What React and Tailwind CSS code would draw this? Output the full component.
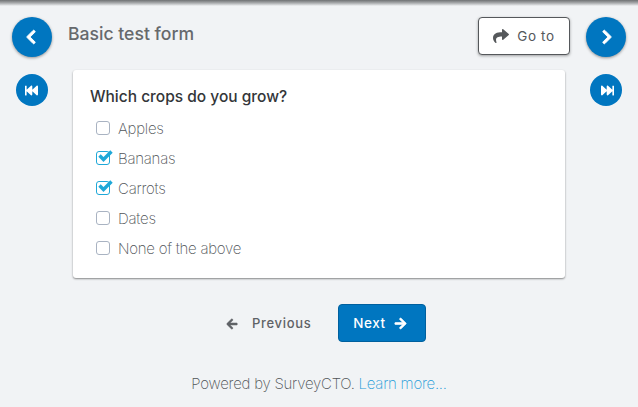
import { FaChevronLeft, FaChevronRight, FaFastBackward, FaFastForward, FaShare, FaArrowLeft, FaArrowRight } from "react-icons/fa";

function Option({ label, checked }) {
  return (
    <label className="flex items-center h-[30px]">
      <span className={`relative w-[14px] h-[14px] rounded-[3px] border-[1.5px] bg-white ml-[6px] ${checked ? "border-[#1fa8d8]" : "border-[#a9b3c2]"}`}>
        {checked && (
          <svg viewBox="0 0 16 14" className="absolute left-[0px] top-[-3px] w-[16px] h-[14px]">
            <path d="M2.5 6.5 L6.5 10.5 L14.5 2.5" fill="none" stroke="#1fa8d8" strokeWidth="3.4" />
          </svg>
        )}
      </span>
      <span className="ml-[8px] text-[15px] font-extralight tracking-[-0.25px] text-[#4f5357] leading-none">{label}</span>
    </label>
  );
}

export default function App() {
  return (
    <div className="w-[638px] h-[407px] overflow-hidden bg-[#f1f3f5] font-['Inter',sans-serif] flex flex-col relative">
      <div className="absolute top-0 left-0 right-0 h-[6px] bg-gradient-to-b from-[#6f7173] via-[#a9abad] to-[#f1f3f5]" />
      <div className="flex items-start pt-[17px] pl-[12px] pr-[12px] h-[70px]">
        <button className="w-[40px] h-[40px] rounded-full bg-[#0076c0] text-white flex items-center justify-center shadow-[0_1px_3px_rgba(0,0,0,0.4)] pr-[2px]">
          <FaChevronLeft size={16} stroke="white" strokeWidth={30} />
        </button>
        <div className="ml-[16px] mt-[5px] text-[17.6px] leading-[24px] font-medium text-[#66696c]">Basic test form</div>
        <button className="ml-auto w-[92px] h-[38px] rounded-[4px] bg-white border border-[#55585b] shadow-[0_1px_3px_rgba(0,0,0,0.35)] flex items-center justify-center text-[#55585b] text-[13.5px] tracking-[0.6px] pt-[1px]">
          <FaShare size={16} className="mr-[8px] -mt-[1px]" />
          Go to
        </button>
        <button className="ml-[16px] w-[40px] h-[40px] rounded-full bg-[#0076c0] text-white flex items-center justify-center shadow-[0_1px_3px_rgba(0,0,0,0.4)] pl-[2px]">
          <FaChevronRight size={16} stroke="white" strokeWidth={30} />
        </button>
      </div>
      <div className="flex items-start pl-[16px]">
        <button className="mt-[4px] w-[32px] h-[32px] rounded-full bg-[#0076c0] text-white flex items-center justify-center pr-[2px]">
          <FaFastBackward size={13} />
        </button>
        <div className="ml-[25px] w-[492px] h-[208px] bg-white rounded-[3px] shadow-[0_1px_2px_rgba(0,0,0,0.45)] pl-[17px] pt-[17px]">
          <div className="text-[15.5px] leading-[20px] font-medium text-[#333639] mb-[6px]">Which crops do you grow?</div>
          <Option label="Apples" />
          <Option label="Bananas" checked />
          <Option label="Carrots" checked />
          <Option label="Dates" />
          <Option label="None of the above" />
        </div>
        <button className="ml-[25px] mt-[4px] w-[32px] h-[32px] rounded-full bg-[#0076c0] text-white flex items-center justify-center pl-[2px]">
          <FaFastForward size={13} />
        </button>
      </div>
      <div className="flex items-center mt-[26px] h-[38px] pl-[226px]">
        <button className="flex items-center text-[#5f6266] text-[13px] font-medium tracking-[0.7px] w-[112px] pt-[1px]">
          <FaArrowLeft size={12} stroke="#5f6266" strokeWidth={25} className="mr-[14px]" />
          Previous
        </button>
        <button className="w-[88px] h-[38px] rounded-[4px] bg-[#0076c0] border border-[#00609e] text-white text-[13.5px] font-medium tracking-[0.6px] flex items-center justify-center pr-[4px] pt-[1px]">
          Next
          <FaArrowRight size={13} stroke="white" strokeWidth={25} className="ml-[8px]" />
        </button>
      </div>
      <div className="mt-[32px] text-center text-[15px] leading-[20px] font-extralight tracking-[-0.25px] text-[#4f5357]">
        Powered by SurveyCTO. <a className="text-[#1f9bd8]">Learn more...</a>
      </div>
    </div>
  );
}
